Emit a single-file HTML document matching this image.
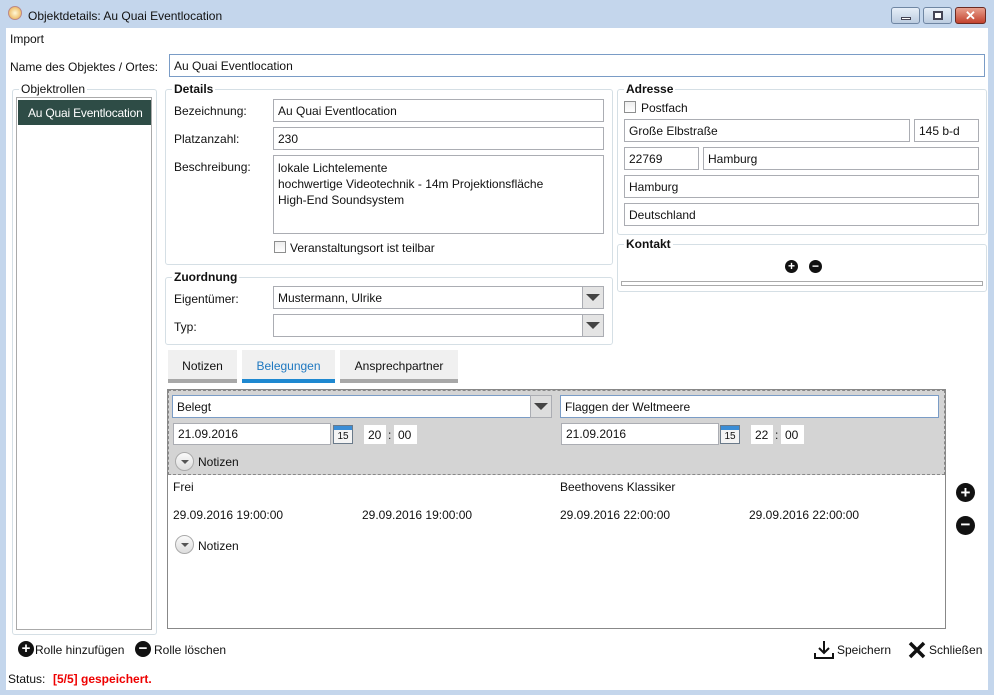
<!DOCTYPE html>
<html><head><meta charset="utf-8"><style>
*{box-sizing:border-box;margin:0;padding:0}
body{width:994px;height:695px;background:#c4d6ec;font-family:"Liberation Sans",sans-serif;font-size:12px;color:#111;position:relative;overflow:hidden;white-space:nowrap}
.a{position:absolute}
.in{position:absolute;background:#fff;border:1px solid #abadb3;padding:4px 4px;height:23px;white-space:nowrap}
.inb{border-color:#7a9cc6}
.gb{position:absolute;border:1px solid #d5dfe5;border-radius:3px}
.gt{position:absolute;background:#fff;font-weight:bold;padding:0 2px;top:-8px;left:6px}
.lbl{position:absolute}
.dd{position:absolute;width:22px;height:23px;background:#e4e4e4;border:1px solid #abadb3}
.dd:after{content:"";position:absolute;left:3px;top:7px;border-left:7px solid transparent;border-right:7px solid transparent;border-top:7px solid #444}
.cb{position:absolute;width:12px;height:12px;border:1px solid #8e8f8f;background:linear-gradient(#eee,#fff)}
.tab{position:absolute;top:350px;height:33px;background:#f0f0f0;border-bottom:4px solid #a8a8a8;text-align:center;padding-top:9px}
.circ{position:absolute;width:19px;height:19px;border-radius:50%;background:linear-gradient(#fafafa,#ddd);border:1px solid #aaa}
.circ:after{content:"";position:absolute;left:5px;top:7px;border-left:4px solid transparent;border-right:4px solid transparent;border-top:4px solid #555}
.bi{position:absolute;border-radius:50%;background:#111;color:#fff;text-align:center;font-weight:bold}
.cal{position:absolute;width:20px;height:19px;border:1px solid #6a7a8a;background:#f4f4f4;font-size:10px;text-align:center;padding-top:5px}
.cal:before{content:"";position:absolute;left:0;right:0;top:0;height:4px;background:#3b8dd6}
</style></head><body>
<div class="a" style="left:8px;top:6px;width:14px;height:14px;border-radius:50%;background:radial-gradient(#fff8d8,#e8a840);border:1px solid #b88"></div>
<div class="a" style="left:28px;top:9px;font-size:12px">Objektdetails: Au Quai Eventlocation</div>
<div class="a" style="left:891px;top:7px;width:29px;height:17px;border:1px solid #6f86a3;border-radius:3px;background:linear-gradient(#e6eef8,#bccce0)"><div class="a" style="left:9px;top:9px;width:10px;height:3px;background:#fff;border:1px solid #445"></div></div>
<div class="a" style="left:923px;top:7px;width:29px;height:17px;border:1px solid #6f86a3;border-radius:3px;background:linear-gradient(#e6eef8,#bccce0)"><div class="a" style="left:9px;top:3px;width:10px;height:9px;border:2px solid #445;background:#fff"></div></div>
<div class="a" style="left:955px;top:7px;width:31px;height:17px;border:1px solid #6b2b23;border-radius:3px;background:linear-gradient(#e8a08e,#c3422e);color:#fff;font-weight:bold;text-align:center;font-size:13px;line-height:15px">✕</div>
<div class="a" style="left:6px;top:28px;width:982px;height:662px;background:#fff"></div>
<div class="a" style="left:10px;top:32px">Import</div>
<div class="a" style="left:10px;top:60px">Name des Objektes / Ortes:</div>
<div class="in inb" style="left:169px;top:54px;width:816px">Au Quai Eventlocation</div>

<div class="gb" style="left:12px;top:89px;width:145px;height:546px"><div class="gt" style="font-weight:normal">Objektrollen</div></div>
<div class="a" style="left:16px;top:97px;width:136px;height:533px;border:1px solid #aaa"></div>
<div class="a" style="left:18px;top:100px;width:133px;height:25px;background:#2e4c46;color:#fff;padding:6px 0 0 10px;font-size:12px;letter-spacing:-0.2px">Au Quai Eventlocation</div>

<div class="gb" style="left:165px;top:89px;width:448px;height:176px"><div class="gt">Details</div></div>
<div class="lbl" style="left:174px;top:104px">Bezeichnung:</div>
<div class="in" style="left:273px;top:99px;width:331px">Au Quai Eventlocation</div>
<div class="lbl" style="left:174px;top:132px">Platzanzahl:</div>
<div class="in" style="left:273px;top:127px;width:331px">230</div>
<div class="lbl" style="left:174px;top:160px">Beschreibung:</div>
<div class="in" style="left:273px;top:155px;width:331px;height:79px;line-height:16px">lokale Lichtelemente<br>hochwertige Videotechnik - 14m Projektionsfläche<br>High-End Soundsystem</div>
<div class="cb" style="left:274px;top:241px"></div>
<div class="lbl" style="left:290px;top:241px">Veranstaltungsort ist teilbar</div>

<div class="gb" style="left:165px;top:277px;width:448px;height:68px"><div class="gt">Zuordnung</div></div>
<div class="lbl" style="left:174px;top:292px">Eigentümer:</div>
<div class="in" style="left:273px;top:286px;width:310px">Mustermann, Ulrike</div>
<div class="dd" style="left:582px;top:286px"></div>
<div class="lbl" style="left:174px;top:320px">Typ:</div>
<div class="in" style="left:273px;top:314px;width:310px"></div>
<div class="dd" style="left:582px;top:314px"></div>

<div class="gb" style="left:617px;top:89px;width:370px;height:146px"><div class="gt">Adresse</div></div>
<div class="cb" style="left:624px;top:101px"></div>
<div class="lbl" style="left:641px;top:101px">Postfach</div>
<div class="in" style="left:624px;top:119px;width:286px">Große Elbstraße</div>
<div class="in" style="left:914px;top:119px;width:65px">145 b-d</div>
<div class="in" style="left:624px;top:147px;width:75px">22769</div>
<div class="in" style="left:703px;top:147px;width:276px">Hamburg</div>
<div class="in" style="left:624px;top:175px;width:355px">Hamburg</div>
<div class="in" style="left:624px;top:203px;width:355px">Deutschland</div>
<div class="gb" style="left:617px;top:244px;width:370px;height:48px"><div class="gt">Kontakt</div></div>
<div class="bi" style="left:785px;top:260px;width:13px;height:13px;font-size:12px;line-height:13px">+</div>
<div class="bi" style="left:809px;top:260px;width:13px;height:13px;font-size:12px;line-height:12px">−</div>
<div class="a" style="left:621px;top:281px;width:362px;height:5px;border:1px solid #aaa"></div>

<div class="tab" style="left:168px;width:69px">Notizen</div>
<div class="tab" style="left:242px;width:93px;border-bottom-color:#1e88d0;color:#1e78c0">Belegungen</div>
<div class="tab" style="left:340px;width:118px">Ansprechpartner</div>

<div class="a" style="left:167px;top:389px;width:779px;height:240px;border:1px solid #888"></div>
<div class="a" style="left:168px;top:390px;width:777px;height:85px;background:#d4d4d4;border:1px dashed #888"></div>
<div class="in inb" style="left:172px;top:395px;width:359px">Belegt</div>
<div class="dd" style="left:530px;top:395px;background:#ddd"></div>
<div class="in inb" style="left:560px;top:395px;width:379px">Flaggen der Weltmeere</div>
<div class="in" style="left:173px;top:423px;width:158px;height:22px;padding-top:3px">21.09.2016</div>
<div class="cal" style="left:333px;top:425px">15</div>
<div class="a" style="left:364px;top:425px;width:22px;height:19px;background:#fff;padding:3px 4px">20</div>
<div class="a" style="left:388px;top:428px">:</div>
<div class="a" style="left:394px;top:425px;width:23px;height:19px;background:#fff;padding:3px 4px">00</div>
<div class="in" style="left:561px;top:423px;width:158px;height:22px;padding-top:3px">21.09.2016</div>
<div class="cal" style="left:720px;top:425px">15</div>
<div class="a" style="left:751px;top:425px;width:22px;height:19px;background:#fff;padding:3px 4px">22</div>
<div class="a" style="left:775px;top:428px">:</div>
<div class="a" style="left:781px;top:425px;width:23px;height:19px;background:#fff;padding:3px 4px">00</div>
<div class="circ" style="left:175px;top:452px"></div>
<div class="a" style="left:198px;top:455px">Notizen</div>
<div class="a" style="left:173px;top:480px">Frei</div>
<div class="a" style="left:560px;top:480px">Beethovens Klassiker</div>
<div class="a" style="left:173px;top:508px">29.09.2016 19:00:00</div>
<div class="a" style="left:362px;top:508px">29.09.2016 19:00:00</div>
<div class="a" style="left:560px;top:508px">29.09.2016 22:00:00</div>
<div class="a" style="left:749px;top:508px">29.09.2016 22:00:00</div>
<div class="circ" style="left:175px;top:535px"></div>
<div class="a" style="left:198px;top:539px">Notizen</div>
<div class="bi" style="left:956px;top:483px;width:19px;height:19px;font-size:17px;line-height:19px">+</div>
<div class="bi" style="left:956px;top:516px;width:19px;height:19px;font-size:17px;line-height:18px">−</div>

<div class="bi" style="left:18px;top:641px;width:16px;height:16px;font-size:15px;line-height:16px">+</div>
<div class="a" style="left:35px;top:643px">Rolle hinzufügen</div>
<div class="bi" style="left:135px;top:641px;width:16px;height:16px;font-size:15px;line-height:15px">−</div>
<div class="a" style="left:154px;top:643px">Rolle löschen</div>
<svg class="a" style="left:813px;top:640px" width="22" height="20" viewBox="0 0 22 20"><path d="M11 1v12M6 8l5 5 5-5M2 13v5h18v-5" fill="none" stroke="#111" stroke-width="2"/></svg>
<div class="a" style="left:837px;top:643px">Speichern</div>
<svg class="a" style="left:907px;top:640px" width="20" height="20" viewBox="0 0 20 20"><path d="M3 3l14 14M17 3L3 17" stroke="#111" stroke-width="3.5"/></svg>
<div class="a" style="left:929px;top:643px">Schließen</div>
<div class="a" style="left:8px;top:672px">Status:</div>
<div class="a" style="left:53px;top:672px;color:#e00;font-weight:bold">[5/5] gespeichert.</div>
</body></html>
